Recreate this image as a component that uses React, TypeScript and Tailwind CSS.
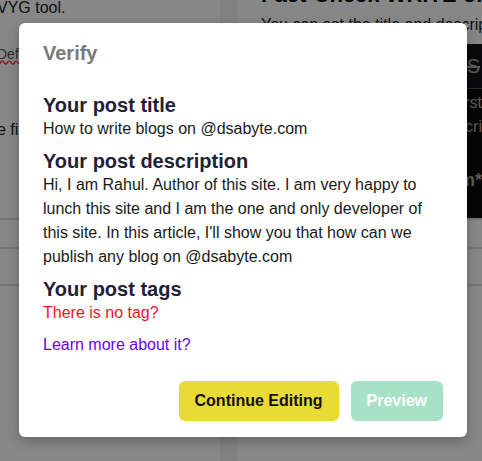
import React from "react";

const font = { fontFamily: '"Liberation Sans", Arial, sans-serif' };

const BackgroundPage = () => (
  <div className="flex h-full w-full bg-white text-[#222]">
    <div className="flex w-[220px] flex-col">
      <div className="h-[218px]">
        <p className="-mt-[4px] -ml-[3px] text-[16px] leading-6">VYG tool.</p>
        <p className="mt-[24px] -ml-[3px] text-[14px] text-[#555] underline decoration-wavy decoration-red-500">Def!</p>
        <p className="mt-[53px] -ml-[3px] text-[16px]">e first</p>
      </div>
      <div className="h-[29px] border-t-2 border-[#ddd]" />
      <div className="h-[37px] border-t-2 border-[#ddd]" />
      <div className="flex-1 border-t-2 border-[#ddd]" />
    </div>
    <div className="w-[17px] bg-[#f3f3f3]" />
    <div className="flex min-w-0 flex-1 flex-col overflow-hidden">
      <div className="h-[218px] pl-[24px]">
        <p className="-mt-[19px] whitespace-nowrap text-[22px] font-bold leading-7 text-[#111]">Fact-Check WRITE or WRITE</p>
        <p className="mt-[4px] whitespace-nowrap text-[16px] leading-6">You can set the title and description</p>
        <div className="mt-[7px] flex h-[174px] flex-col bg-[#0b0b0b] text-[#aaa]">
          <div className="flex h-[45px] items-center justify-end border-b border-[#555] bg-[#141418] pr-[2px]">
            <span className="text-[20px] line-through">S</span>
          </div>
          <p className="mt-[2px] text-right text-[16px]">first</p>
          <p className="text-right text-[16px] leading-6">descri</p>
          <p className="mt-[28px] text-right text-[18px] font-bold">m*</p>
        </div>
      </div>
      <div className="h-[29px] border-t-2 border-[#ddd]" />
      <div className="h-[37px] border-t-2 border-[#ddd]" />
      <div className="flex-1 border-t-2 border-[#ddd]" />
    </div>
  </div>
);

const Section = ({ title, children }: { title: string; children: React.ReactNode }) => (
  <div className="mt-2 first:mt-0">
    <h3 className="text-[20px] font-bold leading-6 text-[#1f2136]">{title}</h3>
    {children}
  </div>
);

export default function App() {
  return (
    <div className="relative h-[461px] w-[482px] overflow-hidden" style={font}>
      <BackgroundPage />
      <div className="absolute inset-0 bg-black/[0.47]" />
      <div className="absolute left-[19px] top-[23px] flex w-[448px] flex-col rounded-md bg-white px-6 pt-4 pb-4 shadow-[0_4px_12px_rgba(0,0,0,0.25)]">
        <h2 className="text-[20px] font-bold leading-7 text-[#7a7a7a]">Verify</h2>
        <div className="mt-[26px] flex flex-col">
          <Section title="Your post title">
            <p className="text-[16px] leading-6 text-[#1a1a1a]">How to write blogs on @dsabyte.com</p>
          </Section>
          <Section title="Your post description">
            <p className="text-[16px] leading-6 text-[#1a1a1a]">
              Hi, I am Rahul. Author of this site. I am very happy to lunch this site and I am the one and only
              developer of this site. In this article, I'll show you that how can we publish any blog on @dsabyte.com
            </p>
          </Section>
          <Section title="Your post tags">
            <p className="text-[16px] leading-6 text-[#e8161f]">There is no tag?</p>
          </Section>
          <a className="mt-2 text-[16px] leading-6 text-[#6a00f4]">Learn more about it?</a>
        </div>
        <div className="mt-[24px] flex justify-end gap-3">
          <button className="h-10 rounded-md bg-[#e8dc34] px-4 text-[16px] font-bold text-[#111]">Continue Editing</button>
          <button className="h-10 rounded-md bg-[#a8e2c6] px-4 text-[16px] font-bold text-white">Preview</button>
        </div>
      </div>
    </div>
  );
}
